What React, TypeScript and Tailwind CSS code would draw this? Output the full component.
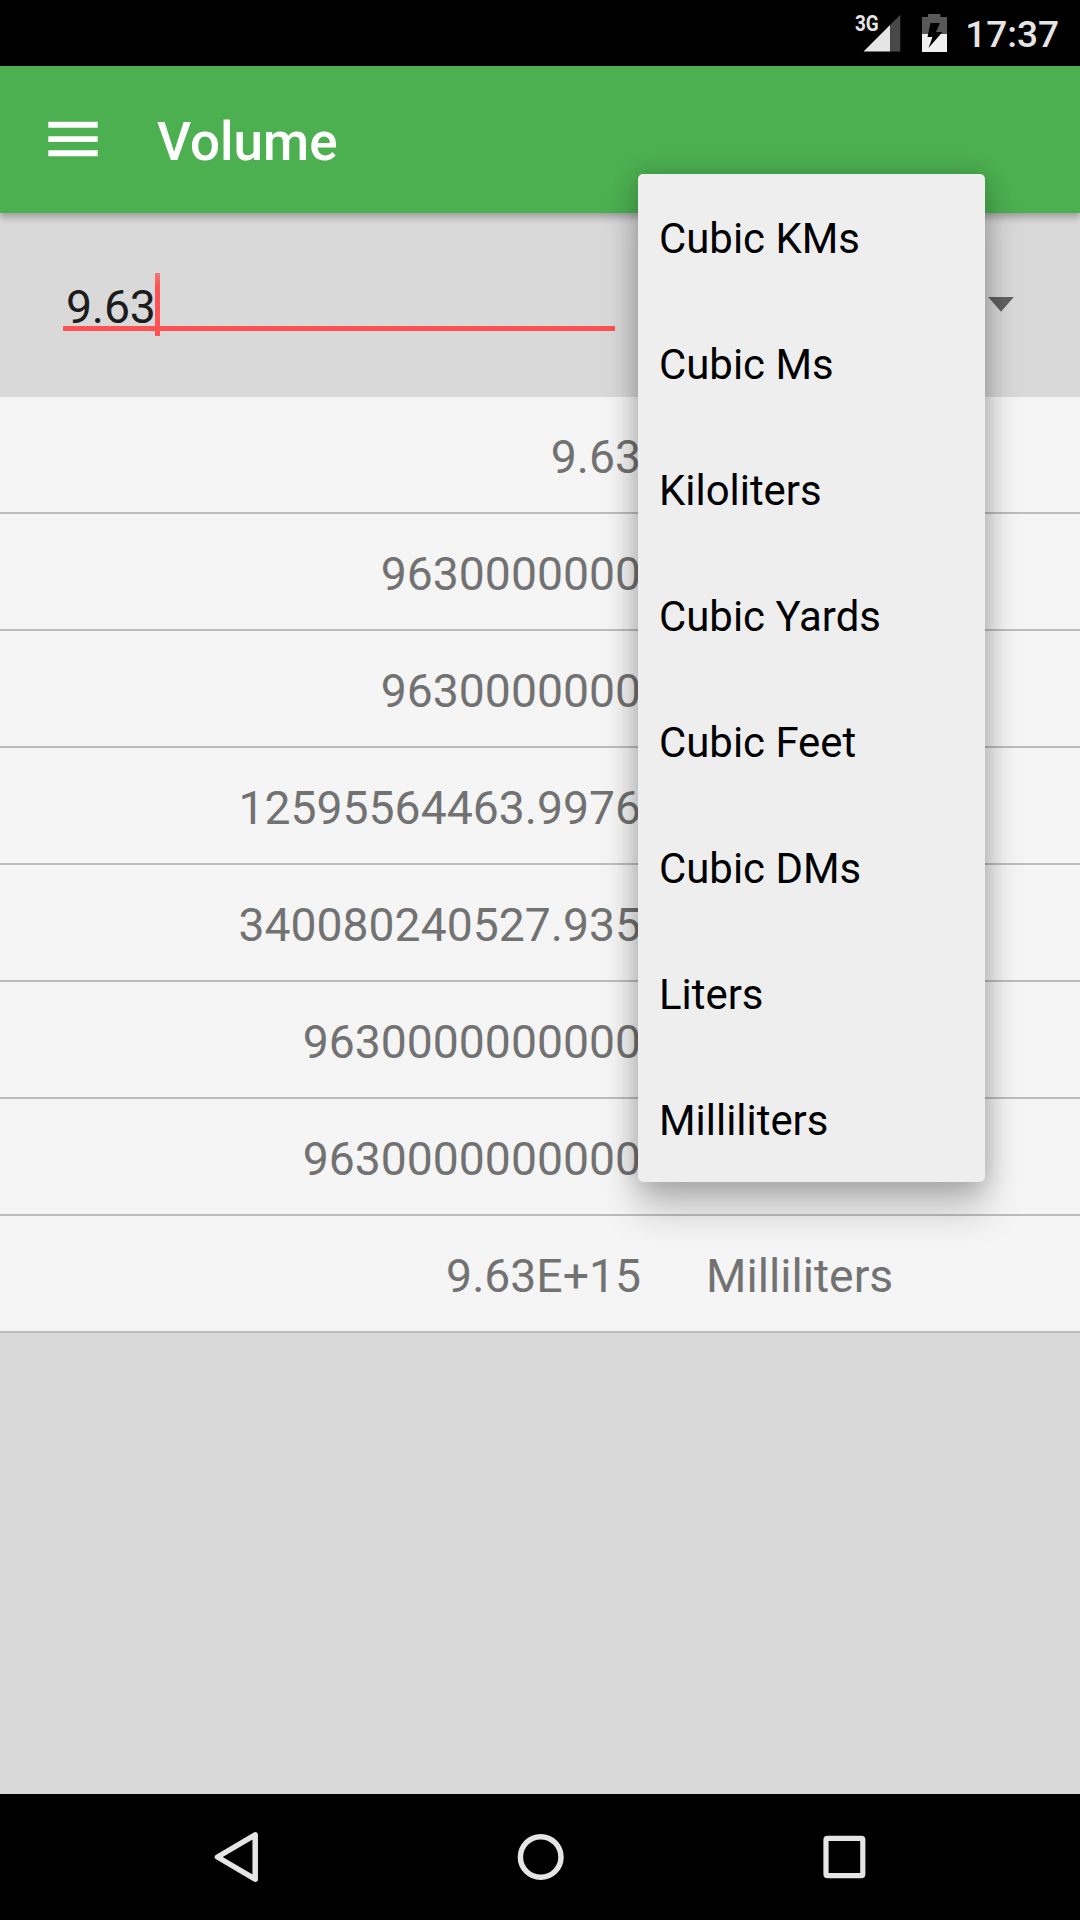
const rows = [
  { value: "9.63", unit: "Cubic KMs" },
  { value: "9630000000", unit: "Cubic Ms" },
  { value: "9630000000", unit: "Kiloliters" },
  { value: "12595564463.9976", unit: "Cubic Yards" },
  { value: "340080240527.935", unit: "Cubic Feet" },
  { value: "9630000000000", unit: "Cubic DMs" },
  { value: "9630000000000", unit: "Liters" },
  { value: "9.63E+15", unit: "Milliliters" },
];

function StatusBar() {
  return (
    <div className="flex h-[66px] shrink-0 items-center justify-end bg-black pr-[21px] text-[#e5e5e5]">
      <div className="relative h-[66px] w-[46px]">
        <span className="absolute left-0 top-[11px] origin-left scale-x-[0.86] text-[22px] leading-[25px] font-bold">
          3G
        </span>
        <svg className="absolute left-[8px] top-[14px]" width="38" height="38" viewBox="0 0 38 38">
          <path d="M0.5 37.5 L27 11 V37.5 Z" fill="#e5e5e5" />
          <path d="M27 11 L37.3 0.7 V37.5 H27 Z" fill="#484848" />
        </svg>
      </div>
      <svg className="ml-[21px]" width="25" height="66" viewBox="0 0 25 66">
        <path d="M0 17 H6 V14 H18.5 V17 H25 V34 H0 Z" fill="#595959" />
        <path d="M0 34 H25 V52 H0 Z" fill="#efefef" />
        <path d="M8.5 23 H18 L14 32 H20.5 L6.5 48 L10.5 37 H5.5 Z" fill="#000" />
      </svg>
      <span className="ml-[18px] pt-[3px] text-[37px] leading-[44px] font-medium">17:37</span>
    </div>
  );
}

function Toolbar() {
  return (
    <header className="relative z-10 flex h-[147px] shrink-0 items-center bg-[#4caf50] pl-[48px] shadow-[0_4px_8px_rgba(0,0,0,0.3)]">
      <svg className="-mt-[2px]" width="50" height="36" viewBox="0 0 50 36">
        <path d="M0.3 0.8 H49.7 V6.8 H0.3 Z M0.3 15.2 H49.7 V21 H0.3 Z M0.3 29.3 H49.7 V35.2 H0.3 Z" fill="#fff" />
      </svg>
      <h1 className="ml-[59px] pt-[4px] text-[53px] leading-[64px] font-medium text-white">Volume</h1>
    </header>
  );
}

function InputPanel() {
  return (
    <div className="flex h-[184px] shrink-0 bg-[#d9d9d9] pl-[63px]">
      <div className="relative mt-[60px] h-[58px] w-[552px] border-b-[5px] border-[#ff5252] pl-[3px] text-[46.4px] leading-[68px] tracking-[-0.2px] text-[#1c1c1c]">
        9.63
        <span className="absolute left-[92px] top-0 h-[63px] w-[5px] bg-gradient-to-b from-[#f17a7a] via-[#ff5252] via-20% to-[#ff5252]" />
      </div>
      <svg className="ml-[373px] mt-[84px]" width="26" height="15" viewBox="0 0 26 15">
        <path d="M0.2 0 H25.8 L13 14.8 Z" fill="#616161" />
      </svg>
    </div>
  );
}

function NavBar() {
  return (
    <nav className="flex h-[126px] shrink-0 items-center bg-black">
      <svg className="ml-[214px]" width="46" height="52" viewBox="0 0 46 52">
        <path d="M3.5 26 L41.2 3.8 V48.2 Z" fill="none" stroke="#e5e5e5" strokeWidth="5.5" strokeLinejoin="round" />
      </svg>
      <svg className="ml-[257px]" width="48" height="48" viewBox="0 0 48 48">
        <circle cx="23.7" cy="24" r="20.3" fill="none" stroke="#e5e5e5" strokeWidth="5.5" />
      </svg>
      <svg className="ml-[257px]" width="48" height="48" viewBox="0 0 48 48">
        <rect x="4" y="5.3" width="36.8" height="37.4" rx="1.5" fill="none" stroke="#e5e5e5" strokeWidth="5.2" />
      </svg>
    </nav>
  );
}

function UnitMenu() {
  return (
    <ul className="absolute left-[638px] top-[174px] z-20 w-[347px] rounded-[5px] bg-[#eeeeee] shadow-[0_28px_38px_rgba(0,0,0,0.21),0_2px_26px_rgba(0,0,0,0.22)]">
      {rows.map((r) => (
        <li key={r.unit} className="flex h-[126px] items-center pt-[3px] pl-[21px] text-[41.9px] leading-[50px] text-black">
          {r.unit}
        </li>
      ))}
    </ul>
  );
}

export default function App() {
  return (
    <div className="relative flex h-[1920px] w-[1080px] flex-col overflow-hidden bg-[#d9d9d9] font-['Roboto',sans-serif]">
      <StatusBar />
      <Toolbar />
      <InputPanel />
      <div className="flex-1">
        {rows.map((r, i) => (
          <div
            key={r.unit}
            className="flex h-[117px] items-center border-b-2 border-[#bdbdbd] bg-[#f5f5f5] pt-[4px] text-[46.3px] leading-[56px] text-[#727272]"
          >
            <span className="w-[641px] text-right">{r.value}</span>
            {i === rows.length - 1 && <span className="ml-[65px]">{r.unit}</span>}
          </div>
        ))}
      </div>
      <NavBar />
      <UnitMenu />
    </div>
  );
}
